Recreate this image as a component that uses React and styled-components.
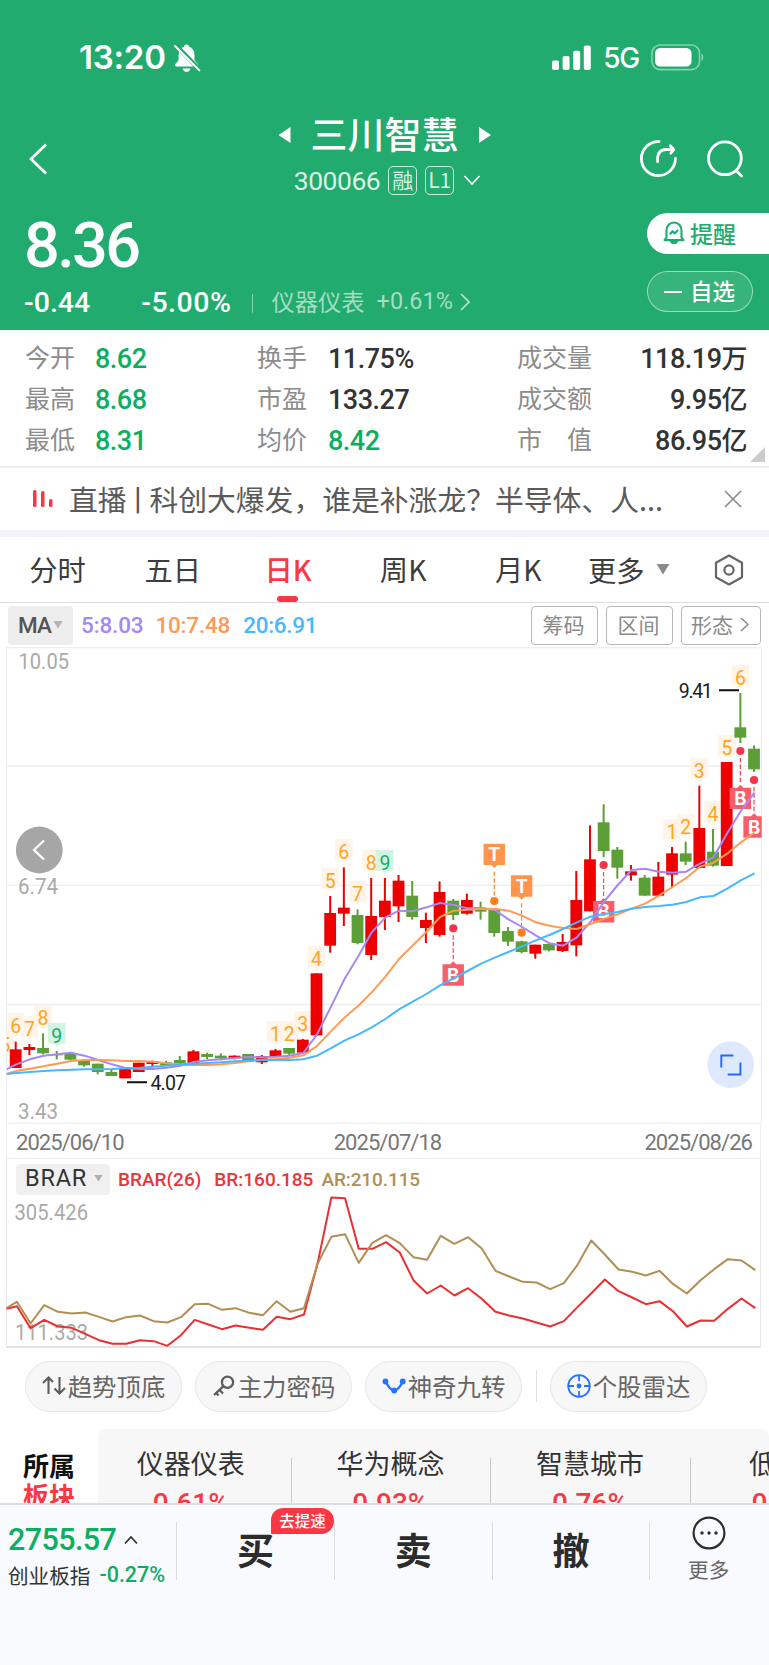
import React from 'react';
import styled, { createGlobalStyle, css } from 'styled-components';

const GREEN = '#21ab6e';
const RED = '#fb3744';
const FALL = '#0cae60';
const NUM = "Roboto, 'Noto Sans CJK SC', sans-serif";

const GlobalStyle = createGlobalStyle`
  * {
    box-sizing: border-box;
  }
  body {
    margin: 0;
    background: #fff;
    font-family: 'Noto Sans CJK SC', sans-serif;
  }
  svg {
    display: block;
    flex-shrink: 0;
  }
`;

const Screen = styled.div`
  width: 769px;
  height: 1665px;
  overflow: hidden;
  display: flex;
  flex-direction: column;
  white-space: nowrap;
  color: #333;
`;

/* ---------- text ---------- */

const Num = styled.span`
  font-family: ${NUM};
  font-size: ${props => props.$size || 26}px;
  font-weight: ${props => props.$weight || 500};
  line-height: 1;
  letter-spacing: ${props => props.$track || 0}px;
  color: ${props => props.$color || 'inherit'};
`;

/* ---------- header ---------- */

const Header = styled.header`
  height: 330px;
  flex-shrink: 0;
  background: ${GREEN};
  color: #fff;
`;

const StatusBar = styled.div`
  display: flex;
  justify-content: space-between;
  height: 115px;
  padding: 0 64px 0 79px;
  align-items: center;
`;

const StatusGroup = styled.div`
  display: flex;
  align-items: center;
  gap: ${props => props.$gap}px;
`;

const Clock = styled.span`
  font-family: Inter, sans-serif;
  font-size: 33px;
  font-weight: 600;
  letter-spacing: -0.2px;
  line-height: 1;
`;

const Network = styled.span`
  font-family: Inter, sans-serif;
  font-size: 28px;
  font-weight: 500;
  letter-spacing: -1.2px;
  line-height: 1;
`;

const TitleBar = styled.div`
  display: grid;
  grid-template-columns: 200px 1fr 200px;
  height: 90px;
`;

const BackArea = styled.div`
  padding: 28px 0 0 27px;
`;

const TitleArea = styled.div`
  display: flex;
  flex-direction: column;
  align-items: center;
`;

const StockName = styled.h1`
  display: flex;
  align-items: center;
  gap: 20px;
  margin: 0;
  height: 40px;
  font-size: 37px;
  font-weight: 500;
  line-height: 36px;
`;

const StockNameText = styled.span`
  padding-bottom: 4px;
`;

const CodeRow = styled.div`
  display: flex;
  align-items: center;
  height: 30px;
  margin-top: 10px;
  padding-left: 6px;
  color: rgba(255, 255, 255, 0.85);
`;

const Code = styled(Num)`
  padding-top: 2px;
`;

const CodeTag = styled.span`
  width: 29px;
  height: 29px;
  margin-left: 8px;
  border: 1.5px solid rgba(255, 255, 255, 0.75);
  border-radius: 5px;
  font-size: 21px;
  line-height: 25px;
  text-align: center;
`;

const CodeCaret = styled.svg`
  margin-left: 9px;
`;

const TitleActions = styled.div`
  display: flex;
  justify-content: flex-end;
  gap: 30px;
  padding: 25px 24px 0 0;
`;

const Quote = styled.div`
  display: flex;
  justify-content: space-between;
  height: 125px;
`;

const QuoteMain = styled.div`
  padding: 9px 0 0 24px;
`;

const Price = styled.div`
  height: 64px;
  font-family: ${NUM};
  font-size: 63px;
  font-weight: 500;
  line-height: 64px;
  letter-spacing: -2.6px;
`;

const ChangeRow = styled.div`
  display: flex;
  align-items: center;
  height: 30px;
  margin-top: 10px;
`;

const ChangePercent = styled(Num)`
  margin-left: 51px;
`;

const ChangeDivider = styled.i`
  width: 1px;
  height: 19px;
  margin: 0 18px 0 21px;
  background: rgba(255, 255, 255, 0.45);
`;

const Industry = styled.span`
  display: flex;
  align-items: center;
  gap: 12px;
  padding-bottom: 3px;
  color: rgba(255, 255, 255, 0.6);
  font-size: 23.3px;
  line-height: 27px;
`;

const IndustryArrow = styled.svg`
  margin-left: -5px;
`;

const QuoteActions = styled.div`
  width: 122px;
  padding-top: 8px;
`;

const RemindButton = styled.div`
  display: flex;
  align-items: center;
  gap: 5px;
  height: 41px;
  padding: 0 0 2px 16px;
  border-radius: 21px 0 0 21px;
  background: #fff;
  color: ${GREEN};
  font-size: 23px;
  font-weight: 500;
`;

const WatchButton = styled.div`
  display: flex;
  align-items: center;
  gap: 8px;
  width: 106px;
  height: 41px;
  margin-top: 17px;
  padding: 0 0 3px 16px;
  border: 1px solid rgba(255, 255, 255, 0.5);
  border-radius: 21px;
  background: rgba(255, 255, 255, 0.1);
  font-size: 22.5px;
  font-weight: 500;

  &::before {
    content: '';
    width: 18px;
    height: 2px;
    margin-top: 3px;
    background: #fff;
  }
`;

/* ---------- key figures ---------- */

const Stats = styled.section`
  position: relative;
  display: grid;
  grid-template-columns: 70px 162px 71px 189px auto 1fr;
  grid-auto-rows: 41px;
  align-items: center;
  height: 138px;
  flex-shrink: 0;
  padding: 8px 22px 0 25px;
  border-bottom: 2px solid #ebedef;
`;

const StatLabel = styled.span`
  font-size: 25px;
  line-height: 36px;
  color: #8c8c8c;
  padding-bottom: 6px;
`;

const StatValue = styled(Num)`
  padding-top: 2px;
  text-align: ${props => (props.$right ? 'right' : 'left')};
`;

const Unit = styled.span`
  font-size: 26px;
`;

const Corner = styled.i`
  position: absolute;
  right: 4px;
  bottom: 4px;
  border-style: solid;
  border-width: 0 0 15px 15px;
  border-color: transparent transparent #ccc transparent;
`;

/* ---------- news ---------- */

const News = styled.div`
  display: flex;
  align-items: center;
  height: 69px;
  flex-shrink: 0;
  padding: 0 27px 0 33px;
  border-bottom: 7px solid #f2f4f9;
`;

const NewsText = styled.span`
  flex: 1;
  margin-left: 16px;
  padding-bottom: 2px;
  font-size: 28.8px;
  color: #5a5a5a;
`;

const NewsDivider = styled.span`
  margin: 0 -3px;
`;

/* ---------- period tabs ---------- */

const Tabs = styled.nav`
  display: flex;
  align-items: center;
  height: 66px;
  flex-shrink: 0;
  border-bottom: 1px solid #ddd;
`;

const Tab = styled.span`
  position: relative;
  width: 115.2px;
  height: 65px;
  text-align: center;
  font-size: 28.3px;
  line-height: 63px;
  color: #3c3c3c;
  ${props =>
    props.$active &&
    css`
      color: ${RED};
      font-weight: 500;

      &::after {
        content: '';
        position: absolute;
        left: 47px;
        bottom: 0;
        width: 21px;
        height: 6px;
        border-radius: 3px;
        background: ${RED};
      }
    `}
`;

const MoreTab = styled(Tab)`
  display: flex;
  align-items: center;
  gap: 11px;
  width: 126px;
  margin-left: 12px;
`;

/* ---------- indicator header ---------- */

const MaRow = styled.div`
  display: flex;
  align-items: center;
  height: 44px;
  flex-shrink: 0;
  padding: 0 8px;
`;

const MaSelect = styled.span`
  display: flex;
  align-items: center;
  gap: 2px;
  width: 65px;
  height: 39px;
  padding-left: 10px;
  border-radius: 4px;
  background: #ededed;
  color: #555;
  font-family: ${NUM};
  font-size: 22.5px;
  font-weight: 500;
  letter-spacing: -0.8px;
`;

const MaValue = styled(Num)`
  margin-left: ${props => props.$left}px;
`;

const ChartButtons = styled.div`
  display: flex;
  gap: 8px;
  margin-left: auto;
`;

const ChartButton = styled.span`
  display: flex;
  align-items: center;
  justify-content: center;
  gap: 7px;
  width: ${props => props.$width}px;
  height: 39px;
  padding: 0 2px 2px 0;
  border: 1.5px solid #b8b8b8;
  border-radius: 4px;
  color: #8b8b8b;
  font-size: 21px;
`;

/* ---------- chart panels ---------- */

const KLineSvg = styled.svg`
  width: 769px;
  height: 477px;
`;

const Dates = styled.div`
  display: flex;
  justify-content: space-between;
  align-items: center;
  width: 755px;
  height: 34px;
  flex-shrink: 0;
  margin-left: 6px;
  padding: 4px 8px 0 9px;
  border: solid #eee;
  border-width: 0 1px;
`;

const DateLabel = styled(Num)`
  &:nth-child(2) {
    margin-left: 7px;
  }
`;

const BrarPanel = styled.div`
  width: 755px;
  height: 190px;
  flex-shrink: 0;
  margin-left: 6px;
  border: 1px solid #e8e8e8;
  border-top: 1.5px solid #ececec;
  border-bottom: 2px solid #e2e2e2;
`;

const BrarHead = styled.div`
  display: flex;
  align-items: center;
  height: 40px;
  padding-left: 9px;
`;

const BrarSelect = styled.span`
  display: flex;
  align-items: center;
  justify-content: space-between;
  width: 94px;
  height: 31px;
  padding: 0 7px 2px 9px;
  border-radius: 4px;
  background: #f0f0f0;
  color: #333;
  font-family: ${NUM};
  font-size: 23.5px;
  letter-spacing: 0.8px;
`;

const BrarSvg = styled.svg`
  overflow: visible;
`;

/* ---------- tool chips ---------- */

const Chips = styled.div`
  display: flex;
  align-items: center;
  height: 81px;
  flex-shrink: 0;
  padding: 0 0 5px 25px;
  gap: 13px;
`;

const Chip = styled.span`
  display: flex;
  align-items: center;
  justify-content: center;
  gap: 2px;
  width: 157px;
  height: 51px;
  padding-bottom: 2px;
  border: 1px solid #e6e6e6;
  border-radius: 26px;
  background: #f7f7f7;
  color: #666;
  font-size: 24.4px;

  svg {
    margin-top: 2px;
  }
`;

const ChipDivider = styled.i`
  width: 1px;
  height: 32px;
  margin: 0 0 0 1px;
  background: #e2e2e2;
`;

/* ---------- sectors ---------- */

const Sectors = styled.section`
  display: flex;
  height: 74px;
  flex-shrink: 0;
  overflow: hidden;
`;

const SectorTitle = styled.div`
  width: 98px;
  flex-shrink: 0;
  padding: 21px 0 0 23px;
  font-size: 26px;
  font-weight: 700;
  line-height: 30px;
  color: #111;
`;

const SectorHot = styled.div`
  color: ${RED};
`;

const SectorList = styled.div`
  display: flex;
  flex: 1;
  overflow: hidden;
  border-radius: 8px 8px 0 0;
  background: #f7f7f8;
`;

const Sector = styled.div`
  display: flex;
  flex-direction: column;
  align-items: center;
  width: 199.6px;
  flex-shrink: 0;
  padding: 17px 2px 0 0;
  font-size: 27px;
  line-height: 34px;
  background: linear-gradient(#ccc, #ccc) right 29px / 1px 60px no-repeat;

  &:first-child {
    margin-left: -6px;
  }
`;

const SectorChange = styled(Num)`
  margin-top: 10px;
`;

/* ---------- trade bar ---------- */

const TradeBar = styled.footer`
  display: flex;
  flex: 1;
  padding-top: 17px;
  border-top: 2px solid #dcdde1;
  background: #f9fafd;
`;

const IndexCell = styled.div`
  width: 176px;
  padding-left: 8px;
`;

const IndexLine = styled.div`
  display: flex;
  align-items: center;
  gap: ${props => props.$gap}px;
  height: ${props => props.$height}px;
  font-size: 20.6px;
`;

const TradeButton = styled.div`
  position: relative;
  width: 157.8px;
  height: 58px;
  border-left: 1px solid #dcdce0;
  text-align: center;
  font-size: 37px;
  font-weight: 700;
  line-height: 54px;
  color: #2c2c2c;
`;

const SpeedBadge = styled.span`
  position: absolute;
  left: 94px;
  top: -14px;
  width: 63px;
  height: 26px;
  border-radius: 12px 13px 13px 1px;
  background: ${RED};
  color: #fff;
  font-size: 15.5px;
  font-weight: 500;
  line-height: 24px;
`;

const MoreCell = styled.div`
  display: flex;
  flex-direction: column;
  align-items: center;
  flex: 1;
  height: 58px;
  padding-right: 2px;
  border-left: 1px solid #dcdce0;
  font-size: 20.6px;
  line-height: 28px;
  color: #666;
`;

const MoreDots = styled.svg`
  margin: -6px 0 5px;
`;

/* ---------- chart data ---------- */

// All vertical values are in thirds of a pixel, measured down from the chart origin.
// [high, body top, body bottom, low, rising]
const CANDLES = [
  [1205, 1228, 1284, 1284, 1], [1212, 1221, 1230, 1245, 1], [1180, 1224, 1240, 1243, 0],
  [1233, 1242, 1246, 1258, 0], [1238, 1239, 1259, 1261, 0], [1259, 1261, 1276, 1280, 0],
  [1271, 1271, 1296, 1303, 0], [1290, 1296, 1308, 1308, 0], [1287, 1287, 1315, 1315, 1],
  [1268, 1268, 1296, 1296, 1], [1262, 1264, 1272, 1279, 1], [1262, 1267, 1275, 1275, 0],
  [1248, 1260, 1271, 1271, 0], [1230, 1234, 1269, 1269, 1], [1238, 1242, 1251, 1257, 0],
  [1240, 1247, 1255, 1261, 0], [1246, 1247, 1255, 1258, 1], [1242, 1242, 1260, 1260, 0],
  [1245, 1248, 1267, 1272, 1], [1227, 1231, 1249, 1249, 1], [1224, 1224, 1241, 1245, 0],
  [1197, 1199, 1238, 1238, 1], [1000, 1000, 1186, 1188, 1], [768, 819, 917, 938, 1],
  [682, 803, 821, 858, 1], [808, 825, 909, 913, 0], [714, 828, 945, 960, 1],
  [714, 782, 831, 870, 1], [705, 722, 799, 846, 1], [723, 767, 831, 839, 0],
  [818, 840, 864, 909, 1], [724, 756, 885, 890, 1], [777, 782, 825, 840, 0],
  [761, 780, 821, 824, 1], [785, 803, 815, 839, 0], [808, 808, 879, 890, 0],
  [861, 873, 905, 918, 0], [902, 904, 936, 940, 0], [914, 914, 941, 956, 1],
  [910, 912, 931, 934, 0], [882, 906, 933, 936, 1], [693, 780, 916, 949, 1],
  [556, 658, 814, 814, 1], [493, 547, 633, 651, 0], [621, 629, 683, 716, 0],
  [675, 694, 706, 722, 1], [705, 713, 767, 767, 0], [666, 710, 767, 767, 1],
  [621, 640, 704, 743, 1], [605, 640, 665, 675, 0], [437, 564, 684, 684, 1],
  [567, 635, 677, 680, 0], [366, 366, 678, 678, 1], [159, 262, 293, 309, 0],
  [316, 326, 388, 396, 0],
];

// The first value of each line sits on the left frame.
const MA5 = [
  1288, 1273, 1258, 1247, 1243, 1238, 1247, 1260, 1273, 1284, 1287, 1287, 1283, 1277, 1266, 1261,
  1258, 1254, 1251, 1252, 1250, 1247, 1239, 1183, 1102, 1018, 950, 877, 832, 812, 814, 802, 789,
  795, 805, 804, 810, 838, 861, 886, 910, 917, 892, 846, 785, 735, 690, 686, 695, 698, 695, 671,
  652, 580, 513, 458,
];
const MA10 = [
  1302, 1293, 1286, 1279, 1271, 1263, 1260, 1260, 1261, 1263, 1263, 1265, 1270, 1274, 1275, 1275,
  1273, 1269, 1264, 1259, 1257, 1253, 1246, 1218, 1175, 1133, 1098, 1057, 1010, 957, 916, 876,
  831, 812, 809, 807, 806, 812, 827, 847, 857, 864, 867, 852, 836, 823, 806, 791, 767, 741, 714,
  680, 668, 641, 607, 578,
];
const MA20 = [
  1302, 1299, 1296, 1293, 1291, 1289, 1288, 1288, 1287, 1285, 1284, 1280, 1277, 1274, 1271, 1269,
  1267, 1264, 1262, 1260, 1260, 1260, 1258, 1247, 1225, 1202, 1184, 1162, 1137, 1108, 1085, 1062,
  1036, 1015, 993, 971, 953, 936, 919, 901, 885, 867, 847, 830, 822, 816, 806, 801, 798, 794,
  786, 772, 768, 746, 721, 700,
];
const BR = [
  568, 560, 626, 601, 621, 625, 643, 662, 673, 673, 662, 665, 679, 647, 601, 615, 629, 618, 625,
  631, 592, 599, 585, 430, 234, 236, 388, 388, 368, 399, 482, 522, 498, 528, 506, 538, 577, 588,
  597, 609, 621, 605, 563, 522, 480, 515, 534, 554, 545, 576, 621, 603, 604, 568, 537, 566,
];
const AR = [
  566, 547, 612, 557, 577, 582, 579, 592, 606, 593, 588, 605, 609, 593, 554, 553, 571, 566, 580,
  587, 545, 577, 566, 432, 352, 344, 430, 370, 347, 371, 413, 421, 349, 373, 353, 387, 454, 471,
  487, 489, 509, 491, 436, 363, 405, 450, 457, 468, 454, 494, 522, 482, 449, 419, 423, 452,
];

// [candle, count, top]
const COUNTS = [
  [-0.8, 5, 1175], [0, 6, 1119], [1, 7, 1128], [2, 8, 1096], [3, 9, 1149], [19, 1, 1143],
  [20, 2, 1143], [21, 3, 1113], [22, 4, 919], [23, 5, 683], [24, 6, 597], [25, 7, 723],
  [26, 8, 630], [27, 9, 630], [48, 1, 537], [49, 2, 521], [50, 3, 353], [51, 4, 484],
  [52, 5, 284], [53, 6, 74],
];

// [candle, dot, box top]
const BUYS = [[32, 865, 973], [43, 675, 783], [53, 333, 443], [54, 420, 529]];
const SELLS = [[35, 783, 611], [37, 878, 706]];

const STEP = 13.673;
const xAt = i => 15.7 + i * STEP;

const linePoints = (values, shift) =>
  values.map((v, i) => `${i === 0 ? 6.5 : xAt(i - 1) + shift},${v / 3}`).join(' ');

const CountTag = ({ index, count, top }) => {
  const x = xAt(index);
  const y = top / 3;
  const nine = count === 9;
  return (
    <g>
      <path
        d={`M${x - 8.7} ${y}h17.4v20.8h-6l-2.7 3-2.7-3h-6z`}
        fill={nine ? '#d3f2e3' : '#fff3e6'}
        fillOpacity="0.95"
      />
      <text x={x} y={y + 20} textAnchor="middle" fontFamily={NUM} fontSize="19.5" fill={nine ? '#18ae68' : '#ffa424'}>
        {count}
      </text>
    </g>
  );
};

const Signal = ({ index, dot, top, sell }) => {
  const x = xAt(index);
  const y = top / 3;
  const color = sell ? '#ff7d1c' : '#f5364a';
  return (
    <g>
      <circle cx={x} cy={dot / 3} r="4.1" fill={color} />
      <line
        x1={x}
        x2={x}
        y1={sell ? y + 28 : dot / 3 + 7}
        y2={sell ? dot / 3 - 5 : y - 4}
        stroke={color}
        strokeWidth="1.1"
        strokeDasharray="4.5 2"
      />
      <path
        d={
          sell
            ? `M${x - 10.7} ${y}h21.4v21.4h-7.6l-3.1 3-3.1-3h-7.6z`
            : `M${x - 10.7} ${y}h7.6l3.1-3 3.1 3h7.6v21.4h-21.4z`
        }
        fill={sell ? '#ff954b' : '#fa5d69'}
      />
      <text x={x} y={y + 17.4} textAnchor="middle" fontFamily="Inter, sans-serif" fontSize="18.5" fontWeight="700" fill="#fff">
        {sell ? 'T' : 'B'}
      </text>
    </g>
  );
};

const AxisText = ({ x, y, width, children }) => (
  <text x={x} y={y} textLength={width} lengthAdjust="spacingAndGlyphs" fontFamily={NUM} fontSize="21.5" fill="#aaa">
    {children}
  </text>
);

const KLine = () => (
  <KLineSvg viewBox="0 7 769 477">
    <defs>
      <clipPath id="plot">
        <rect x="6.5" y="7" width="755.2" height="478" />
      </clipPath>
    </defs>
    <g stroke="#eee" strokeWidth="1.3" fill="none">
      <path d="M6 7.7h756M6 126h756M6 245.4h756M6 364.5h756M6 483.4h756M6.6 7v477M761.4 7v477" />
    </g>
    <AxisText x="18.5" y="28.7" width="50.5">10.05</AxisText>
    <AxisText x="18" y="254" width="40">6.74</AxisText>
    <AxisText x="18" y="478.7" width="40">3.43</AxisText>

    <g clipPath="url(#plot)">
      {COUNTS.map(([i, count, top]) => (
        <CountTag key={i} index={i} count={count} top={top} />
      ))}
      {CANDLES.map(([high, top, bottom, low, up], i) => (
        <g key={i} fill={up ? '#ee0000' : '#5c9f37'}>
          <rect x={xAt(i) - 1} y={high / 3} width="2" height={(low - high) / 3} />
          <rect x={xAt(i) - 5.9} y={top / 3} width="11.8" height={(bottom - top) / 3} />
        </g>
      ))}
      {SELLS.map(([i, dot, top]) => (
        <Signal key={i} index={i} dot={dot} top={top} sell />
      ))}
      {BUYS.map(([i, dot, top]) => (
        <Signal key={i} index={i} dot={dot} top={top} />
      ))}
      <g fill="none" strokeWidth="2" strokeLinejoin="round">
        <polyline points={linePoints(MA5, 0.5)} stroke="#a588f5" />
        <polyline points={linePoints(MA10, 0.5)} stroke="#ff9a56" />
        <polyline points={linePoints(MA20, 0.5)} stroke="#46b8fb" />
      </g>
    </g>

    <g stroke="#111" strokeWidth="2" fill="#1c1c1c" fontFamily={NUM} fontSize="19.5">
      <path d="M127 442.3h20M719 50.2h20" />
      <text x="150.5" y="450" stroke="none" textLength="35.5">4.07</text>
      <text x="678.8" y="57.7" stroke="none" textLength="34">9.41</text>
    </g>

    <circle cx="39.3" cy="210" r="23.4" fill="#a6a6a6" />
    <path d="M44 200.5l-10 9.5 10 9.5" fill="none" stroke="#fff" strokeWidth="2.3" />
    <circle cx="730.7" cy="424.7" r="23.4" fill="#dfe9fe" />
    <path d="M721.3 427.5v-12h12M740.4 422.5v12h-12.7" fill="none" stroke="#2468fc" strokeWidth="1.9" />
  </KLineSvg>
);

const Brar = () => (
  <BrarSvg width="753" height="146" viewBox="7 79.5 753 146">
    <AxisText x="14.5" y="100" width="73.5">305.426</AxisText>
    <AxisText x="15" y="220.5" width="73">111.333</AxisText>
    <g fill="none" strokeWidth="2" strokeLinejoin="round">
      <polyline points={linePoints(BR, 1.2)} stroke="#e92f32" />
      <polyline points={linePoints(AR, 1.2)} stroke="#b28e55" />
    </g>
  </BrarSvg>
);

/* ---------- icons ---------- */

const MutedBell = () => (
  <svg width="28" height="30" viewBox="0 0 28 30">
    <path d="M13.5 1.5c-1.4 0-2.3.9-2.3 2.1C7.5 5 5.6 8 5.6 12v4.5c0 2-3.6 4-3.6 5.6 0 .8.6 1.3 1.6 1.3h20c1 0 1.6-.5 1.6-1.3 0-1.6-3.7-3.6-3.7-5.6V12c0-4-1.9-7-5.6-8.4 0-1.2-1-2.1-2.4-2.1zM9.7 25.4h7.8c-.4 2-1.9 3.4-3.9 3.4s-3.5-1.4-3.9-3.4z" fill="#fff" />
    <path d="M2.6 2l24 24.6" stroke={GREEN} strokeWidth="4.4" />
    <path d="M2 3l24.4 24.4" stroke="#fff" strokeWidth="2" strokeLinecap="round" />
  </svg>
);

const SignalBars = () => (
  <svg width="39" height="26" viewBox="0 0 39 26" fill="#fff">
    <rect x="0" y="15.5" width="7" height="9.5" rx="2" />
    <rect x="10.6" y="11" width="7" height="14" rx="2" />
    <rect x="21.2" y="5.7" width="7" height="19.3" rx="2" />
    <rect x="31.8" y="0.5" width="7" height="24.5" rx="2" />
  </svg>
);

const Battery = () => (
  <svg width="54" height="27" viewBox="0 0 54 27">
    <rect x="1" y="1" width="47.5" height="24.6" rx="8" fill="none" stroke="#fff" strokeOpacity="0.45" strokeWidth="1.6" />
    <rect x="4" y="4" width="36.5" height="18.6" rx="5.2" fill="#fff" />
    <path d="M50.5 9.5c2.3.8 2.3 6.6 0 7.6z" fill="#fff" fillOpacity="0.5" />
  </svg>
);

const Share = () => (
  <svg width="38" height="38" viewBox="0 0 38 38" fill="none" stroke="#fff" strokeWidth="2.8" strokeLinecap="round" strokeLinejoin="round">
    <path d="M20 1.6A17 17 0 1 0 36.4 18.5" />
    <path d="M18.6 21.7V19c0-6.5 3.5-9.5 9-9.5h6" />
    <path d="M31.2 5.8l3.6 3.6-2.9 3.8" />
  </svg>
);

const Search = () => (
  <svg width="38" height="38" viewBox="0 0 38 38" fill="none" stroke="#fff" strokeWidth="2.8" strokeLinecap="round">
    <circle cx="17.9" cy="18.3" r="16.4" />
    <path d="M29 30.5l5.6 5.5" />
  </svg>
);

const RemindIcon = () => (
  <svg width="22" height="24" viewBox="0 0 22 24" fill="none" stroke={GREEN} strokeWidth="2.1" strokeLinejoin="round">
    <path d="M3.5 16.5v-7c0-4.7 3.2-8 7.5-8s7.5 3.3 7.5 8v7l2 2.6h-19z" />
    <path d="M6.5 19.5c.8 3 2.6 3.6 4.5 3.6s3.7-.6 4.5-3.6z" fill={GREEN} stroke="none" />
    <path d="M6.8 13.2l2.8-3 2.2 2.2L15 9" />
  </svg>
);

const Triangle = ({ size, color }) => (
  <svg width={size} height={size * 0.75} viewBox="0 0 12 9">
    <path d="M0.5 0h11L6 9z" fill={color} />
  </svg>
);

const Hexagon = () => (
  <svg width="30" height="32" viewBox="0 0 30 32" fill="none" stroke="#666" strokeWidth="2.2" strokeLinejoin="round">
    <path d="M15 1.5l13 7.2v14.6l-13 7.2-13-7.2V8.7z" />
    <circle cx="15" cy="16" r="4.6" />
  </svg>
);

const UpDown = () => (
  <svg width="24" height="22" viewBox="0 0 24 22" fill="none" stroke="#5c5c5c" strokeWidth="2.1">
    <path d="M6.5 19V2.5M1 8l5.5-5.5L11 7M17.5 2v16.5M12.5 13.5l5 5 5.5-5.5" />
  </svg>
);

const Key = () => (
  <svg width="24" height="22" viewBox="0 0 24 22" fill="none" stroke="#5c5c5c" strokeWidth="2.3">
    <circle cx="15.5" cy="7.2" r="5.6" />
    <path d="M11.5 11.2L2 20M7.5 15l3.5 3.5M4 17.8l2.6 2.6" />
  </svg>
);

const NineTurn = () => (
  <svg width="24" height="20" viewBox="0 0 24 20" fill="#2673ff">
    <path d="M4 6c2 4.500 4.500 7.500 8.200 9 3.700-1.500 6.200-4.500 8.300-9" fill="none" stroke="#2673ff" strokeWidth="2.2" />
    <circle cx="3.5" cy="5.5" r="2.9" />
    <circle cx="20.7" cy="5.5" r="2.9" />
    <circle cx="12.2" cy="14.5" r="2.9" />
  </svg>
);

const Radar = () => (
  <svg width="24" height="24" viewBox="0 0 24 24" fill="none" stroke="#2673ff" strokeWidth="1.8">
    <circle cx="12" cy="12" r="10.8" />
    <path d="M12 1v6M12 17v6M1 12h6M17 12h6" />
    <circle cx="12" cy="12" r="2.4" fill="#2673ff" stroke="none" />
  </svg>
);

const MoreIcon = () => (
  <MoreDots width="34" height="34" viewBox="0 0 34 34">
    <circle cx="17" cy="17" r="15.4" fill="none" stroke="#2c2c2c" strokeWidth="2.2" />
    <g fill="#2c2c2c">
      <circle cx="10" cy="17" r="1.7" />
      <circle cx="17" cy="17" r="1.7" />
      <circle cx="24" cy="17" r="1.7" />
    </g>
  </MoreDots>
);

/* ---------- content ---------- */

const STATS = [
  ['今开', '8.62', FALL], ['换手', '11.75%'], ['成交量', '118.19', null, '万'],
  ['最高', '8.68', FALL], ['市盈', '133.27'], ['成交额', '9.95', null, '亿'],
  ['最低', '8.31', FALL], ['均价', '8.42', FALL], ['市\u3000值', '86.95', null, '亿'],
];

const DATES = ['2025/06/10', '2025/07/18', '2025/08/26'];

const SECTORS = [
  ['仪器仪表', '0.61%'],
  ['华为概念', '0.93%'],
  ['智慧城市', '0.76%'],
  ['低价股', '0.55%'],
];

const App = () => (
  <Screen>
    <GlobalStyle />
    <Header>
      <StatusBar>
        <StatusGroup $gap={7}>
          <Clock>13:20</Clock>
          <MutedBell />
        </StatusGroup>
        <StatusGroup $gap={12}>
          <SignalBars />
          <Network>5G</Network>
          <Battery />
        </StatusGroup>
      </StatusBar>

      <TitleBar>
        <BackArea>
          <svg width="20" height="32" viewBox="0 0 20 32" fill="none" stroke="#fff" strokeWidth="2.7">
            <path d="M19 1.5L4 16l15 14.5" />
          </svg>
        </BackArea>
        <TitleArea>
          <StockName>
            <svg width="13" height="18" viewBox="0 0 13 18"><path d="M12.5 1v16L.5 9z" fill="#fff" /></svg>
            <StockNameText>三川智慧</StockNameText>
            <svg width="13" height="18" viewBox="0 0 13 18"><path d="M0 1v16l12-8z" fill="#fff" /></svg>
          </StockName>
          <CodeRow>
            <Code $size={26.5} $weight={400} $track={-0.5}>300066</Code>
            <CodeTag>融</CodeTag>
            <CodeTag>L1</CodeTag>
            <CodeCaret width="18" height="12" viewBox="0 0 18 12" fill="none" stroke="#fff" strokeWidth="1.6">
              <path d="M1.5 2L9 10l7.5-8" />
            </CodeCaret>
          </CodeRow>
        </TitleArea>
        <TitleActions>
          <Share />
          <Search />
        </TitleActions>
      </TitleBar>

      <Quote>
        <QuoteMain>
          <Price>8.36</Price>
          <ChangeRow>
            <Num $size={28.5}>-0.44</Num>
            <ChangePercent $size={28.5} $track={0.5}>-5.00%</ChangePercent>
            <ChangeDivider />
            <Industry>
              仪器仪表
              <Num $size={23.5} $weight={400}>+0.61%</Num>
              <IndustryArrow width="10" height="18" viewBox="0 0 10 18" fill="none" stroke="#fff" strokeOpacity="0.7" strokeWidth="1.6">
                <path d="M1 1l8 8-8 8" />
              </IndustryArrow>
            </Industry>
          </ChangeRow>
        </QuoteMain>
        <QuoteActions>
          <RemindButton><RemindIcon />提醒</RemindButton>
          <WatchButton>自选</WatchButton>
        </QuoteActions>
      </Quote>
    </Header>

    <Stats>
      {STATS.map(([label, value, color, unit]) => (
        <React.Fragment key={label}>
          <StatLabel>{label}</StatLabel>
          <StatValue $size={27} $track={-0.5} $color={color} $right={Boolean(unit)}>
            {value}
            {unit && <Unit>{unit}</Unit>}
          </StatValue>
        </React.Fragment>
      ))}
      <Corner />
    </Stats>

    <News>
      <svg width="20" height="20" viewBox="0 0 20 20" fill={RED}>
        <rect x="0" y="1" width="3.5" height="17" rx="1.5" />
        <rect x="8" y="2" width="3.5" height="16" rx="1.5" />
        <rect x="16" y="10" width="3.5" height="8" rx="1.5" />
      </svg>
      <NewsText>
        直播<NewsDivider>丨</NewsDivider>科创大爆发，谁是补涨龙？半导体、人...
      </NewsText>
      <svg width="18" height="18" viewBox="0 0 18 18" stroke="#888" strokeWidth="1.6">
        <path d="M1 1l16 16M17 1L1 17" />
      </svg>
    </News>

    <Tabs>
      <Tab>分时</Tab>
      <Tab>五日</Tab>
      <Tab $active>日K</Tab>
      <Tab>周K</Tab>
      <Tab>月K</Tab>
      <MoreTab>
        更多
        <Triangle size={14} color="#8a8a8a" />
      </MoreTab>
      <Hexagon />
    </Tabs>

    <MaRow>
      <MaSelect>MA<Triangle size={10} color="#b5b5b5" /></MaSelect>
      <MaValue $size={22.5} $left={8} $track={-0.15} $color="#a588f5">5:8.03</MaValue>
      <MaValue $size={22.5} $left={12} $track={-0.2} $color="#ff9a56">10:7.48</MaValue>
      <MaValue $size={22.5} $left={13} $track={-0.3} $color="#46b8fb">20:6.91</MaValue>
      <ChartButtons>
        <ChartButton $width={67}>筹码</ChartButton>
        <ChartButton $width={67}>区间</ChartButton>
        <ChartButton $width={80}>
          形态
          <svg width="9" height="15" viewBox="0 0 9 15" fill="none" stroke="#888" strokeWidth="1.5">
            <path d="M1 1l7 6.5L1 14" />
          </svg>
        </ChartButton>
      </ChartButtons>
    </MaRow>

    <KLine />

    <Dates>
      {DATES.map(date => (
        <DateLabel key={date} $size={22} $weight={400} $track={-0.95} $color="#777">{date}</DateLabel>
      ))}
    </Dates>
    <BrarPanel>
      <BrarHead>
        <BrarSelect>BRAR<Triangle size={9} color="#b0b0b0" /></BrarSelect>
        <MaValue $size={19} $left={8} $color="#e5373a">BRAR(26)</MaValue>
        <MaValue $size={19} $left={13} $color="#e5373a">BR:160.185</MaValue>
        <MaValue $size={19} $left={8} $track={-0.1} $color="#b28e55">AR:210.115</MaValue>
      </BrarHead>
      <Brar />
    </BrarPanel>

    <Chips>
      <Chip><UpDown />趋势顶底</Chip>
      <Chip><Key />主力密码</Chip>
      <Chip><NineTurn />神奇九转</Chip>
      <ChipDivider />
      <Chip><Radar />个股雷达</Chip>
    </Chips>

    <Sectors>
      <SectorTitle>
        所属
        <SectorHot>板块</SectorHot>
      </SectorTitle>
      <SectorList>
        {SECTORS.map(([name, change]) => (
          <Sector key={name}>
            {name}
            <SectorChange $size={28} $color={RED}>{change}</SectorChange>
          </Sector>
        ))}
      </SectorList>
    </Sectors>

    <TradeBar>
      <IndexCell>
        <IndexLine $height={36} $gap={8}>
          <Num $size={30.5} $track={-0.6} $color={FALL}>2755.57</Num>
          <svg width="14" height="10" viewBox="0 0 14 10" fill="none" stroke="#333" strokeWidth="1.8">
            <path d="M1 8.5L7 2l6 6.5" />
          </svg>
        </IndexLine>
        <IndexLine $height={33} $gap={9}>
          创业板指
          <Num $size={21.5} $color={FALL}>-0.27%</Num>
        </IndexLine>
      </IndexCell>
      <TradeButton>
        买
        <SpeedBadge>去提速</SpeedBadge>
      </TradeButton>
      <TradeButton>卖</TradeButton>
      <TradeButton>撤</TradeButton>
      <MoreCell>
        <MoreIcon />
        更多
      </MoreCell>
    </TradeBar>
  </Screen>
);

export default App;
